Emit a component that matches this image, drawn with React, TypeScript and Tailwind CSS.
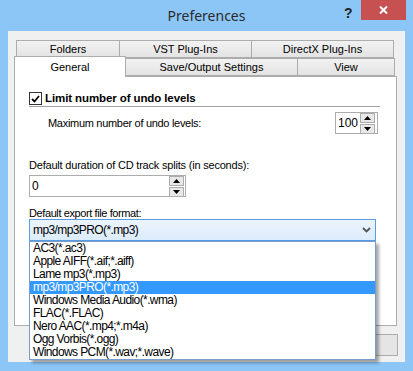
import React from 'react';

const formats = [
  'AC3(*.ac3)',
  'Apple AIFF(*.aif;*.aiff)',
  'Lame mp3(*.mp3)',
  'mp3/mp3PRO(*.mp3)',
  'Windows Media Audio(*.wma)',
  'FLAC(*.FLAC)',
  'Nero AAC(*.mp4;*.m4a)',
  'Ogg Vorbis(*.ogg)',
  'Windows PCM(*.wav;*.wave)',
];

function Spin() {
  return (
    <div className="flex flex-col gap-[1px]">
      <div className="flex h-[10px] w-[15px] items-center justify-center border border-[#acacac] bg-[#e8e8e8]">
        <svg width="7" height="4" viewBox="0 0 7 4"><path d="M0 4 L3.5 0 L7 4 Z" fill="#000" /></svg>
      </div>
      <div className="flex h-[10px] w-[15px] items-center justify-center border border-[#acacac] bg-[#e8e8e8]">
        <svg width="7" height="4" viewBox="0 0 7 4"><path d="M0 0 L3.5 4 L7 0 Z" fill="#000" /></svg>
      </div>
    </div>
  );
}

function Tab({ label, w, selected }: { label: string; w: string; selected?: boolean }) {
  return (
    <div
      className={`flex items-center justify-center border border-[#acacac] ${w} ${
        selected ? 'relative z-10 -mb-[1px] h-[21px] border-b-0 bg-white' : 'h-[18px] bg-gradient-to-b from-[#f2f2f2] to-[#e3e3e3]'
      }`}
    >
      {label}
    </div>
  );
}

export default function App() {
  return (
    <div
      className="relative h-[371px] w-[413px] overflow-hidden bg-[#8cc6f7] text-[11px] text-black"
      style={{ fontFamily: '"Liberation Sans", Arial, sans-serif' }}
    >
      {/* title bar */}
      <div className="relative flex h-[31px] items-center justify-center">
        <span className="text-[14px] text-[#2b2b2b]" style={{ fontFamily: '"Noto Sans", "Open Sans", sans-serif' }}>
          Preferences
        </span>
        <span className="absolute left-[344px] top-[3px] text-[14px] font-bold text-[#222]">?</span>
        <div className="absolute left-[361px] top-0 flex h-[20px] w-[45px] items-center justify-center bg-[#c75050]">
          <svg width="9" height="8" viewBox="0 0 9 8">
            <path d="M1 0.5 L8 7.5 M8 0.5 L1 7.5" stroke="#fff" strokeWidth="2" />
          </svg>
        </div>
      </div>

      {/* client area */}
      <div className="mx-[8px] h-[331px] bg-[#f0f0f0] pl-[6px] pt-[9px]">
        {/* back tab row */}
        <div className="ml-[2px] flex h-[17px] items-start">
          <Tab label="Folders" w="w-[104px]" />
          <div className="-ml-[1px]"><Tab label="VST Plug-Ins" w="w-[133px]" /></div>
          <div className="-ml-[1px]"><Tab label="DirectX Plug-Ins" w="w-[143px]" /></div>
        </div>
        {/* front tab row */}
        <div className="flex h-[19px] items-end">
          <Tab label="General" w="w-[112px]" selected />
          <div className="-ml-[1px]"><Tab label="Save/Output Settings" w="w-[173px]" /></div>
          <div className="-ml-[1px]"><Tab label="View" w="w-[98px]" /></div>
        </div>

        {/* panel */}
        <div className="h-[250px] w-[383px] border border-[#acacac] bg-white pl-[14px] pr-[16px] pt-[15px]">
          <div className="flex h-[13px] items-center gap-[3px]">
            <div className="flex h-[13px] w-[13px] items-center justify-center border border-[#333] bg-white">
              <svg width="9" height="8" viewBox="0 0 9 8">
                <path d="M1 4 L3.5 6.5 L8 1" stroke="#000" strokeWidth="1.8" fill="none" />
              </svg>
            </div>
            <span className="text-[11.5px] font-bold leading-[13px] tracking-[-0.1px]">Limit number of undo levels</span>
          </div>
          <div className="mt-[1px] h-[1px] w-[351px] bg-[#a0a0a0]" />

          <div className="mt-[5px] flex h-[22px] items-center justify-between pl-[19px] pr-[2px]">
            <span className="tracking-[-0.3px]">Maximum number of undo levels:</span>
            <div className="flex h-[22px] w-[43px] items-center justify-between border border-[#acacac] bg-white pl-[2px] pr-[2px] text-[12px]">
              <span>100</span>
              <Spin />
            </div>
          </div>

          <div className="mt-[25px] h-[13px] leading-[13px] tracking-[-0.2px]">Default duration of CD track splits (in seconds):</div>
          <div className="mt-[3px] flex h-[22px] w-[157px] items-center justify-between border border-[#acacac] bg-white pl-[2px] pr-[1px] text-[12px]">
            <span>0</span>
            <Spin />
          </div>

          <div className="mt-[10px] h-[12px] leading-[12px] tracking-[-0.4px]">Default export file format:</div>
          <div className="flex h-[22px] w-[347px] items-center justify-between border border-[#569de5] bg-gradient-to-b from-[#ecf4fc] to-[#dcecfc] pl-[3px] pr-[4px] text-[12px] tracking-[-0.6px]">
            <span>mp3/mp3PRO(*.mp3)</span>
            <svg width="9" height="6" viewBox="0 0 9 6">
              <path d="M1 1 L4.5 4.5 L8 1" stroke="#555" strokeWidth="1.8" fill="none" />
            </svg>
          </div>
        </div>

        {/* bottom button, mostly hidden behind the list */}
        <div className="ml-[300px] mt-[8px] h-[22px] w-[84px] border border-[#acacac] bg-[#e5e5e5]" />
      </div>

      {/* opened dropdown list */}
      <div className="absolute left-[29px] top-[241px] w-[347px] border border-[#7a9ccc] bg-white shadow-[3px_3px_3px_rgba(0,0,0,0.35)]">
        {formats.map((f) => (
          <div
            key={f}
            className={`h-[13px] pl-[3px] text-[12px] leading-[13px] tracking-[-0.6px] ${
              f === 'mp3/mp3PRO(*.mp3)' ? 'bg-[#3399ff] text-white' : ''
            }`}
          >
            {f}
          </div>
        ))}
      </div>
    </div>
  );
}
